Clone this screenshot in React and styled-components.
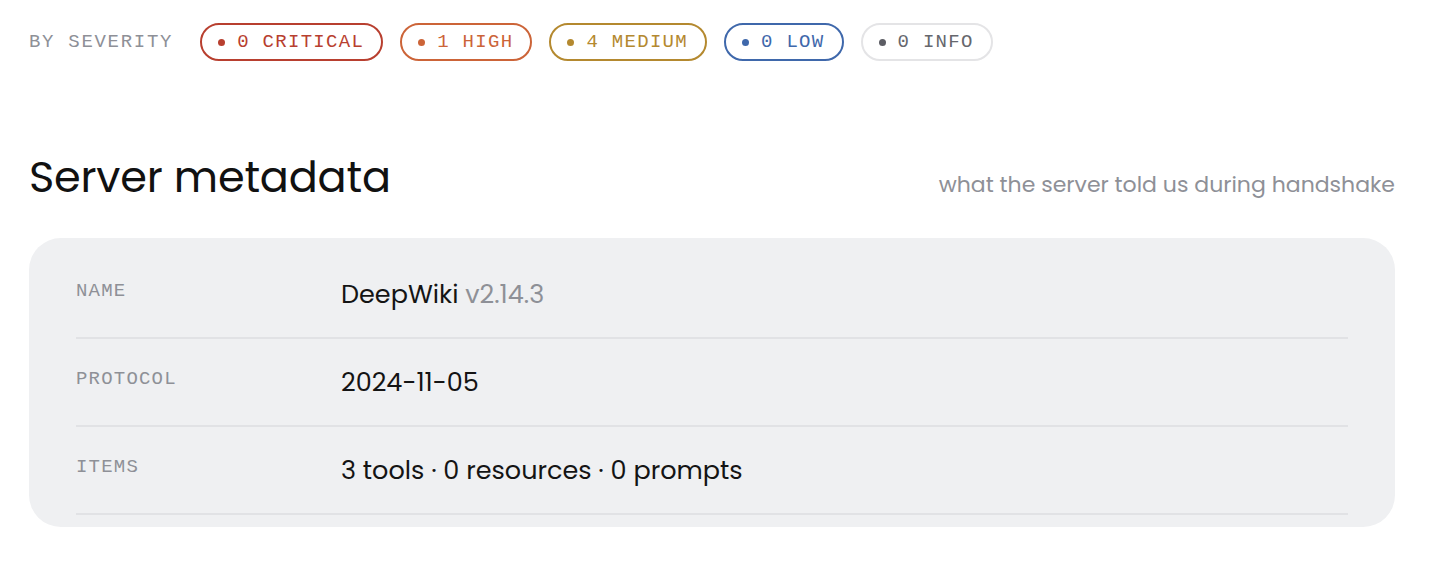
import styled, { createGlobalStyle } from "styled-components";

const GlobalStyle = createGlobalStyle`
  body {
    margin: 0;
    background: #ffffff;
    font-family: "Poppins", Inter, "Noto Sans", sans-serif;
    color: #141414;
  }
`;

const MONO = `"Liberation Mono", "DejaVu Sans Mono", monospace`;

const Page = styled.div`
  padding: 23px 41px 40px 29px;
`;

const SeverityBar = styled.div`
  display: flex;
  align-items: center;
  gap: 17px;
`;

const SeverityLabel = styled.span`
  font-family: ${MONO};
  font-size: 19px;
  letter-spacing: 1.7px;
  color: #8e9097;
  margin-right: 10px;
`;

const Badge = styled.span`
  display: inline-flex;
  align-items: center;
  box-sizing: border-box;
  height: 38px;
  padding: 0 17px 0 16px;
  border: 2px solid ${(p) => p.$border || p.$color};
  border-radius: 999px;
  font-family: ${MONO};
  font-size: 19px;
  letter-spacing: 1.3px;
  color: ${(p) => p.$color};
`;

const Dot = styled.span`
  width: 7px;
  height: 7px;
  border-radius: 50%;
  background: ${(p) => p.$color};
  margin-right: 12px;
  flex-shrink: 0;
`;

const SectionHead = styled.div`
  display: flex;
  align-items: baseline;
  justify-content: space-between;
  margin-top: 91px;
`;

const Title = styled.h2`
  margin: 0;
  font-size: 43px;
  font-weight: 400;
  line-height: 50px;
  letter-spacing: -0.2px;
  color: #111111;
`;

const Subtitle = styled.span`
  font-size: 22px;
  color: #8e9097;
`;

const Card = styled.div`
  margin-top: 36px;
  background: #eff0f2;
  border-radius: 32px;
  padding: 13px 47px 12px 47px;
`;

const Row = styled.div`
  display: grid;
  grid-template-columns: 265px 1fr;
  align-items: start;
  box-sizing: border-box;
  height: 88px;
  padding-top: 28px;
  border-bottom: 2px solid #e1e2e5;
`;

const RowLabel = styled.span`
  font-family: ${MONO};
  font-size: 19px;
  letter-spacing: 1.2px;
  color: #8e9097;
  line-height: 24px;
`;

const RowValue = styled.span`
  font-size: 25.5px;
  line-height: 30px;
  color: #141414;
`;

const Muted = styled.span`
  color: #8e9097;
`;

const severities = [
  { label: "0 CRITICAL", color: "#b83f2f" },
  { label: "1 HIGH", color: "#cc6438" },
  { label: "4 MEDIUM", color: "#b4892f" },
  { label: "0 LOW", color: "#3f68ab" },
  { label: "0 INFO", color: "#66676d", border: "#e4e4e6", dot: "#5c5d64" },
];

export default function App() {
  return (
    <Page>
      <GlobalStyle />
      <SeverityBar>
        <SeverityLabel>BY SEVERITY</SeverityLabel>
        {severities.map((s) => (
          <Badge key={s.label} $color={s.color} $border={s.border}>
            <Dot $color={s.dot || s.color} />
            {s.label}
          </Badge>
        ))}
      </SeverityBar>

      <SectionHead>
        <Title>Server metadata</Title>
        <Subtitle>what the server told us during handshake</Subtitle>
      </SectionHead>

      <Card>
        <Row>
          <RowLabel>NAME</RowLabel>
          <RowValue>
            DeepWiki <Muted>v2.14.3</Muted>
          </RowValue>
        </Row>
        <Row>
          <RowLabel>PROTOCOL</RowLabel>
          <RowValue>2024-11-05</RowValue>
        </Row>
        <Row>
          <RowLabel>ITEMS</RowLabel>
          <RowValue>3 tools · 0 resources · 0 prompts</RowValue>
        </Row>
      </Card>
    </Page>
  );
}
